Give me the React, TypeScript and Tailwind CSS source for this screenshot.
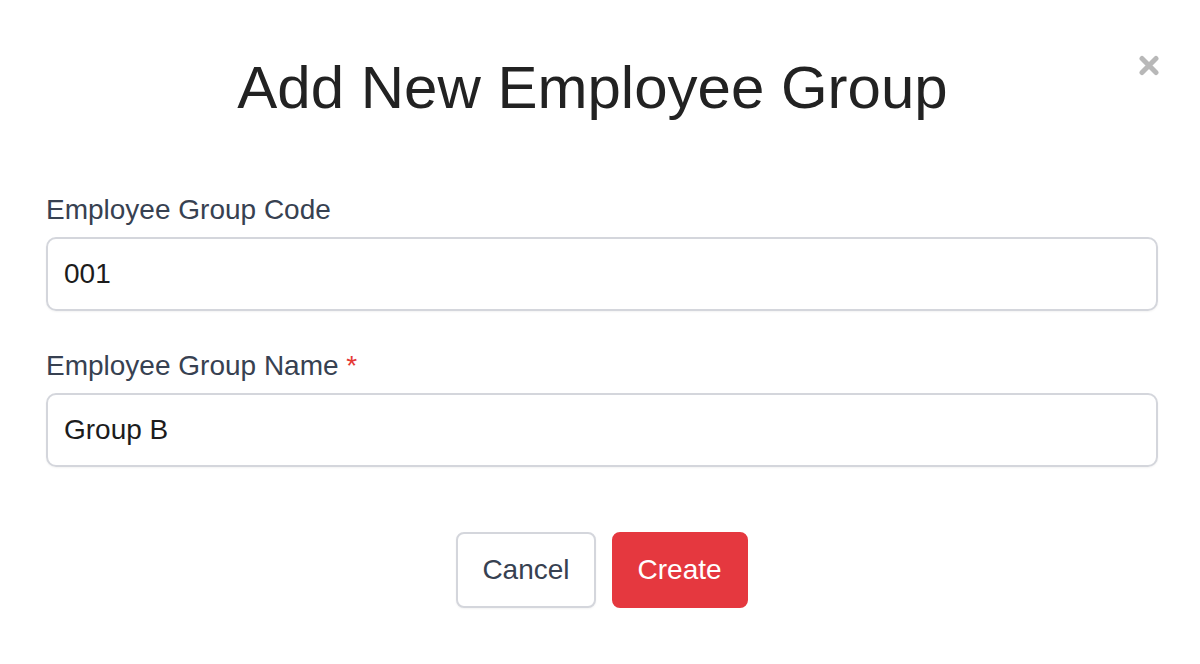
import { useState } from "react";

export default function App() {
  const [code, setCode] = useState("001");
  const [name, setName] = useState("Group B");

  return (
    <div className="relative min-h-screen bg-white font-['Liberation_Sans',Arial,sans-serif]">
      {/* Close */}
      <button
        type="button"
        aria-label="Close"
        className="absolute left-[1138px] top-[55px] flex h-[21px] w-[22px] items-center justify-center"
      >
        <svg width="22" height="21" viewBox="0 0 22 21">
          <path
            d="M4 3.5 L18 17.5 M18 3.5 L4 17.5"
            stroke="#b8b8b8"
            strokeWidth="5"
            strokeLinecap="round"
          />
        </svg>
      </button>

      <div className="pl-[46px] pr-[42px] pt-[58px]">
        {/* Header */}
        <h2 className="pr-[19px] text-center text-[60px] leading-[60px] text-[#222222]">
          Add New Employee Group
        </h2>

        {/* Fields */}
        <div className="mt-[72px]">
          <label className="block text-[28px] leading-[40px] text-[#374151]">
            Employee Group Code
          </label>
          <input
            type="text"
            value={code}
            onChange={(e) => setCode(e.target.value)}
            className="mt-[7px] block h-[74px] w-full rounded-[10px] border-2 border-[#d4d6dc] px-[16px] text-[28px] text-[#1c1c1c] shadow-[0_1px_2px_rgba(0,0,0,0.05)] outline-none"
          />
        </div>

        <div className="mt-[35px]">
          <label className="block text-[28px] leading-[40px] text-[#374151]">
            Employee Group Name <span className="text-[#e53935]">*</span>
          </label>
          <input
            type="text"
            value={name}
            onChange={(e) => setName(e.target.value)}
            className="mt-[7px] block h-[74px] w-full rounded-[10px] border-2 border-[#d4d6dc] px-[16px] text-[28px] text-[#1c1c1c] shadow-[0_1px_2px_rgba(0,0,0,0.05)] outline-none"
          />
        </div>

        {/* Actions */}
        <div className="mt-[65px] flex justify-center gap-4">
          <button
            type="button"
            className="h-[76px] rounded-[8px] border-2 border-[#d4d6dc] bg-white px-[24px] text-[28px] text-[#374151] shadow-[0_1px_2px_rgba(0,0,0,0.05)]"
          >
            Cancel
          </button>
          <button
            type="button"
            className="h-[76px] rounded-[8px] border-2 border-[#e5383f] bg-[#e5383f] px-[24px] text-[28px] text-white"
          >
            Create
          </button>
        </div>
      </div>
    </div>
  );
}
